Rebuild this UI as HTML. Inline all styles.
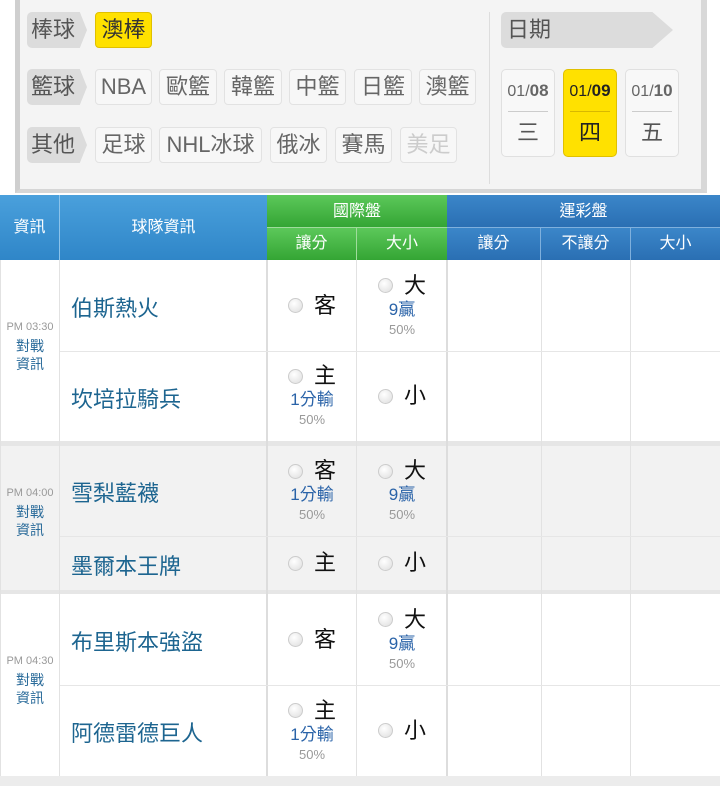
<!DOCTYPE html>
<html><head><meta charset="utf-8"><style>
*{margin:0;padding:0;box-sizing:border-box}
body{width:720px;height:786px;background:#fff;position:relative;overflow:hidden;font-family:"Liberation Sans","Noto Sans CJK TC",sans-serif}
.a{position:absolute}
.panel{left:15px;top:0;width:692px;height:193px;background:#f4f4f4;border-left:5px solid #cfcfcf;border-right:6px solid #d8d8d8;border-bottom:4px solid #d6d6d6}
.lab{position:absolute;height:36px;background:#dcdcdc;color:#555;font-size:22px;line-height:36px;padding-left:4px;border-radius:5px 0 0 5px;clip-path:polygon(0 0,88% 0,100% 50%,88% 100%,0 100%)}
.btn{position:absolute;height:36px;background:#f7f7f7;border:1px solid #e2e2e2;border-radius:4px;color:#666;font-size:22px;line-height:34px;text-align:center}
.y{background:#ffe100;border-color:#e0c000;color:#333}
.d{position:absolute;top:69px;width:54px;height:88px;border:1px solid #e0e0e0;border-radius:5px;background:#f8f8f8;text-align:center;color:#666}
.d.y{background:#ffe100;border-color:#e0c000;color:#222}
.d .t{height:41px;line-height:42px;font-size:16px}
.d .t b{font-size:17px}
.d .l{margin:0 6px;border-top:1px solid #ccc}
.d .w{font-size:22px;line-height:42px;color:#555}
.hb{background:linear-gradient(#4aa0dc,#2f86c8);color:#fff;font-size:16px;text-align:center}
.hg{background:linear-gradient(#5cc85a,#34a534);color:#fff;font-size:16px;text-align:center}
.hd{background:linear-gradient(#3b86c9,#2a6fb3);color:#fff;font-size:16px;text-align:center}
.vl{position:absolute;width:1px;background:#e2e2e2}
.hl{position:absolute;height:1px;background:#e6e6e6;left:60px;width:660px}
.team{position:absolute;left:71px;font-size:22px;color:#1d6590}
.tm{position:absolute;left:0;width:60px;text-align:center}
.tm .p{font-size:11px;color:#999}
.tm .v{font-size:14px;color:#2a6b9a;line-height:18px;margin-top:4px}
.c{position:absolute;width:90px;text-align:center;display:flex;flex-direction:column;align-items:center;justify-content:center}
.m{font-size:22px;color:#111;display:flex;align-items:center;line-height:26px}
.r{display:inline-block;width:15px;height:15px;border-radius:50%;border:1px solid #ccc;background:radial-gradient(circle at 40% 35%,#fff,#ddd);margin-right:11px}
.s{font-size:17px;color:#2a63a8;line-height:22px}
.pc{font-size:13px;color:#999;line-height:18px}
</style></head><body>
<div class="a panel"></div>
<div class="a" style="left:489px;top:12px;width:1px;height:172px;background:#ddd"></div>
<div class="lab" style="left:27px;top:12px;width:60px">棒球</div>
<div class="btn y" style="left:95px;top:12px;width:57px">澳棒</div>
<div class="lab" style="left:27px;top:69px;width:60px">籃球</div>
<div class="btn" style="left:95px;top:69px;width:57px">NBA</div>
<div class="btn" style="left:159px;top:69px;width:58px">歐籃</div>
<div class="btn" style="left:224px;top:69px;width:58px">韓籃</div>
<div class="btn" style="left:289px;top:69px;width:57px">中籃</div>
<div class="btn" style="left:354px;top:69px;width:58px">日籃</div>
<div class="btn" style="left:419px;top:69px;width:57px">澳籃</div>
<div class="lab" style="left:27px;top:127px;width:60px">其他</div>
<div class="btn" style="left:95px;top:127px;width:57px">足球</div>
<div class="btn" style="left:159px;top:127px;width:103px">NHL冰球</div>
<div class="btn" style="left:270px;top:127px;width:57px">俄冰</div>
<div class="btn" style="left:335px;top:127px;width:57px">賽馬</div>
<div class="btn" style="left:400px;top:127px;width:57px;color:#ccc">美足</div>
<div class="lab" style="left:501px;top:12px;width:172px;padding-left:6px">日期</div>
<div class="d" style="left:501px"><div class="t">01/<b>08</b></div><div class="l"></div><div class="w">三</div></div>
<div class="d y" style="left:563px"><div class="t">01/<b>09</b></div><div class="l" style="border-color:#d8b800"></div><div class="w" style="color:#222">四</div></div>
<div class="d" style="left:625px"><div class="t">01/<b>10</b></div><div class="l"></div><div class="w">五</div></div>

<div class="a hb" style="left:0;top:195px;width:60px;height:65px;line-height:65px;border-right:1px solid #8cc3ea">資訊</div>
<div class="a hb" style="left:60px;top:195px;width:207px;height:65px;line-height:65px">球隊資訊</div>
<div class="a hg" style="left:267px;top:195px;width:180px;height:33px;line-height:33px;border-bottom:1px solid #9fdc9c">國際盤</div>
<div class="a hg" style="left:267px;top:228px;width:90px;height:32px;line-height:32px;border-right:1px solid #9fdc9c">讓分</div>
<div class="a hg" style="left:357px;top:228px;width:90px;height:32px;line-height:32px">大小</div>
<div class="a hd" style="left:447px;top:195px;width:273px;height:33px;line-height:33px;border-bottom:1px solid #7fb0dd">運彩盤</div>
<div class="a hd" style="left:447px;top:228px;width:94px;height:32px;line-height:32px;border-right:1px solid #7fb0dd">讓分</div>
<div class="a hd" style="left:541px;top:228px;width:90px;height:32px;line-height:32px;border-right:1px solid #7fb0dd">不讓分</div>
<div class="a hd" style="left:631px;top:228px;width:89px;height:32px;line-height:32px">大小</div>

<div class="a" style="left:0;top:441px;width:720px;height:5px;background:#e6e6e6"></div>
<div class="a" style="left:0;top:446px;width:720px;height:144px;background:#f2f2f2"></div>
<div class="a" style="left:0;top:590px;width:720px;height:4px;background:#e6e6e6"></div>
<div class="a" style="left:0;top:776px;width:720px;height:10px;background:#ececec"></div>
<div class="vl" style="left:0;top:260px;height:516px"></div>
<div class="vl" style="left:59px;top:260px;height:516px"></div>
<div class="vl" style="left:266px;top:260px;height:516px;width:2px;background:#ddd"></div>
<div class="vl" style="left:356px;top:260px;height:516px"></div>
<div class="vl" style="left:446px;top:260px;height:516px;width:2px;background:#ddd"></div>
<div class="vl" style="left:541px;top:260px;height:516px"></div>
<div class="vl" style="left:630px;top:260px;height:516px"></div>
<div class="hl" style="top:351px"></div>
<div class="hl" style="top:536px"></div>
<div class="hl" style="top:685px"></div>

<div class="tm" style="top:321px"><div class="p">PM 03:30</div><div class="v">對戰<br>資訊</div></div>
<div class="team" style="top:291px">伯斯熱火</div>
<div class="team" style="top:382px">坎培拉騎兵</div>
<div class="c" style="left:267px;top:260px;height:91px"><div class="m"><span class="r"></span>客</div></div>
<div class="c" style="left:357px;top:260px;height:91px"><div class="m"><span class="r"></span>大</div><div class="s">9贏</div><div class="pc">50%</div></div>
<div class="c" style="left:267px;top:351px;height:90px"><div class="m"><span class="r"></span>主</div><div class="s">1分輸</div><div class="pc">50%</div></div>
<div class="c" style="left:357px;top:351px;height:90px"><div class="m"><span class="r"></span>小</div></div>
<div class="tm" style="top:487px"><div class="p">PM 04:00</div><div class="v">對戰<br>資訊</div></div>
<div class="team" style="top:476px">雪梨藍襪</div>
<div class="team" style="top:549px">墨爾本王牌</div>
<div class="c" style="left:267px;top:446px;height:90px"><div class="m"><span class="r"></span>客</div><div class="s">1分輸</div><div class="pc">50%</div></div>
<div class="c" style="left:357px;top:446px;height:90px"><div class="m"><span class="r"></span>大</div><div class="s">9贏</div><div class="pc">50%</div></div>
<div class="c" style="left:267px;top:536px;height:54px"><div class="m"><span class="r"></span>主</div></div>
<div class="c" style="left:357px;top:536px;height:54px"><div class="m"><span class="r"></span>小</div></div>
<div class="tm" style="top:655px"><div class="p">PM 04:30</div><div class="v">對戰<br>資訊</div></div>
<div class="team" style="top:625px">布里斯本強盜</div>
<div class="team" style="top:716px">阿德雷德巨人</div>
<div class="c" style="left:267px;top:594px;height:91px"><div class="m"><span class="r"></span>客</div></div>
<div class="c" style="left:357px;top:594px;height:91px"><div class="m"><span class="r"></span>大</div><div class="s">9贏</div><div class="pc">50%</div></div>
<div class="c" style="left:267px;top:685px;height:91px"><div class="m"><span class="r"></span>主</div><div class="s">1分輸</div><div class="pc">50%</div></div>
<div class="c" style="left:357px;top:685px;height:91px"><div class="m"><span class="r"></span>小</div></div>
</body></html>
